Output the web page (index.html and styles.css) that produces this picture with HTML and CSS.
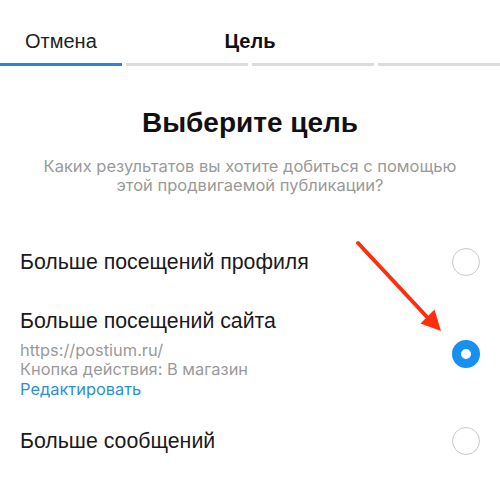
FILE: index.html
```html
<!DOCTYPE html>
<html lang="ru">
<head>
<meta charset="utf-8">
<title>Цель</title>
<link rel="stylesheet" href="styles.css">
</head>
<body>
<div class="screen">
  <header class="tabs">
    <span class="tab-cancel">Отмена</span>
    <span class="tab-title">Цель</span>
    <span></span>
  </header>
  <div class="progress">
    <span class="seg seg-active"></span>
    <span class="seg"></span>
    <span class="seg"></span>
    <span class="seg"></span>
  </div>
  <h1 class="title">Выберите цель</h1>
  <p class="subtitle">Каких результатов вы хотите добиться с помощью<br>этой продвигаемой публикации?</p>
  <div class="options">
    <div class="option">
      <div class="option-text">
        <div class="option-name">Больше посещений профиля</div>
      </div>
      <span class="radio"></span>
    </div>
    <div class="option option-site">
      <div class="option-text">
        <div class="option-name">Больше посещений сайта</div>
        <div class="option-details">
          <div class="detail">https://postium.ru/</div>
          <div class="detail">Кнопка действия: В магазин</div>
          <div class="detail link">Редактировать</div>
        </div>
      </div>
      <span class="radio radio-on"></span>
    </div>
    <div class="option option-last">
      <div class="option-text">
        <div class="option-name">Больше сообщений</div>
      </div>
      <span class="radio"></span>
    </div>
  </div>
  <svg class="arrow" width="500" height="504" viewBox="0 0 500 504">
    <line x1="358" y1="243" x2="427" y2="317" stroke="#ff2e0c" stroke-width="4" stroke-linecap="round"/>
    <polygon points="441,331 420.5,323.5 434.5,309.5" fill="#ff2e0c"/>
  </svg>
</div>
</body>
</html>
```
FILE: styles.css
```css
html, body {
  margin: 0;
  padding: 0;
  background: #ffffff;
}

body {
  font-family: "Liberation Sans", Arial, sans-serif;
  color: #111111;
}

.screen {
  position: relative;
  width: 500px;
  height: 504px;
  overflow: hidden;
}

.tabs {
  display: grid;
  grid-template-columns: 1fr auto 1fr;
  padding-top: 29px;
  font-size: 20px;
  line-height: 24px;
}

.tab-cancel {
  padding-left: 25px;
  color: #222222;
}

.tab-title {
  font-weight: bold;
  color: #111111;
}

.progress {
  display: flex;
  gap: 4px;
  margin-top: 10px;
}

.seg {
  flex: 1;
  height: 3px;
  background: #dcdcdc;
}

.seg-active {
  background: #2a86d2;
}

.title {
  margin: 40px 0 0;
  text-align: center;
  font-size: 28px;
  line-height: 34px;
  font-weight: bold;
  color: #111111;
}

.subtitle {
  margin: 17px 0 0;
  text-align: center;
  font-family: Inter, "Liberation Sans", sans-serif;
  font-size: 16.5px;
  line-height: 18.5px;
  color: #9a9a9a;
}

.options {
  display: flex;
  flex-direction: column;
  margin-top: 54px;
  padding: 0 20px;
}

.option {
  display: flex;
  align-items: center;
  justify-content: space-between;
}

.option-site {
  margin-top: 33px;
}

.option-last {
  margin-top: 28px;
}

.option-name {
  font-size: 21.3px;
  line-height: 24px;
  color: #1a1a1a;
}

.option-details {
  margin-top: 7.5px;
  font-family: Inter, "Liberation Sans", sans-serif;
  font-size: 16.4px;
  line-height: 19.5px;
  color: #9a9a9a;
}

.link {
  color: #2b8fd6;
}

.radio {
  box-sizing: border-box;
  width: 28px;
  height: 28px;
  border-radius: 50%;
  border: 1.5px solid #c9c9c9;
  background: #ffffff;
  flex: none;
}

.radio-on {
  border: 9.5px solid #1890f1;
}

.arrow {
  position: absolute;
  left: 0;
  top: 0;
  pointer-events: none;
}
```
